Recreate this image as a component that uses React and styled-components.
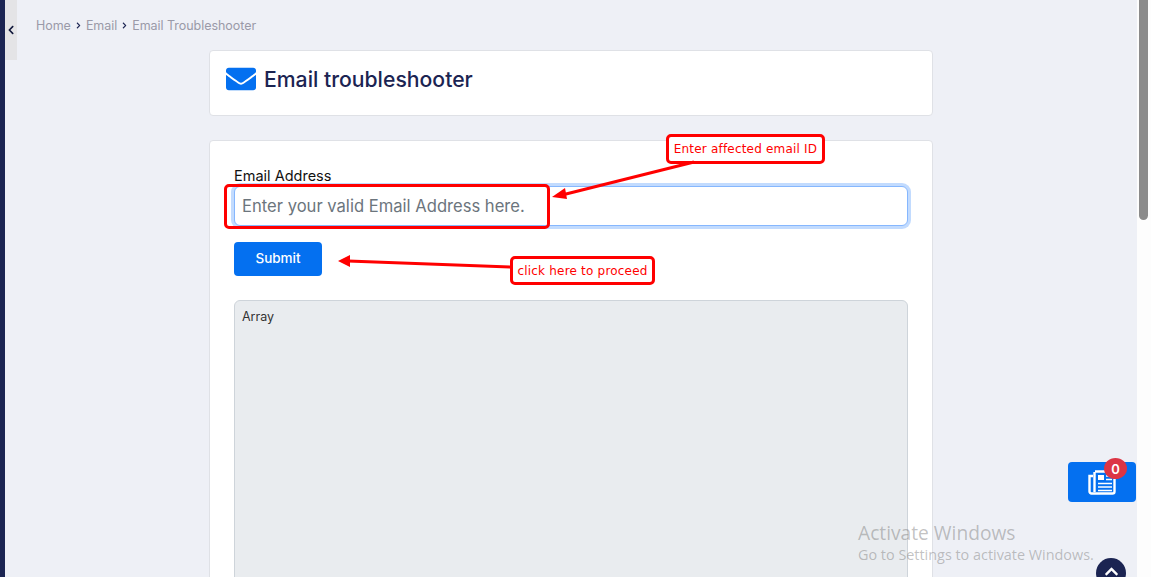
import React from "react";
import styled, { createGlobalStyle } from "styled-components";
import { FaEnvelope, FaChevronUp, FaChevronLeft, FaChevronRight } from "react-icons/fa";

const GlobalStyle = createGlobalStyle`
  html, body {
    margin: 0;
    height: 577px;
    overflow: hidden;
    background: #eef0f6;
    font-family: "Inter", "Liberation Sans", sans-serif;
  }
  * { box-sizing: border-box; }
`;

const Shell = styled.div`
  position: relative;
  display: flex;
  width: 1151px;
  height: 577px;
  overflow: hidden;
`;

const Rail = styled.div`
  width: 5px;
  background: #1b2452;
`;

const Main = styled.main`
  flex: 1;
  position: relative;
  padding: 0 0 0 31px;
  background: #eef0f6;
`;

const Toggle = styled.div`
  position: absolute;
  left: 0;
  top: 0;
  width: 12px;
  height: 60px;
  background: #e4e4e6;
  display: flex;
  align-items: center;
  justify-content: center;
  color: #10173a;
  font-size: 10px;
`;

const Breadcrumb = styled.nav`
  display: flex;
  align-items: center;
  gap: 4px;
  height: 50px;
  color: #9a9aa8;
  font-size: 12.5px;
  letter-spacing: -0.04px;
  svg {
    color: #1b2452;
    font-size: 7px;
  }
`;

const Column = styled.div`
  width: 724px;
  margin-left: 173px;
  display: flex;
  flex-direction: column;
  gap: 24px;
`;

const Card = styled.section`
  background: #fff;
  border: 1px solid #dfe1e6;
  border-radius: 4px;
`;

const HeaderCard = styled(Card)`
  height: 66px;
  display: flex;
  align-items: center;
  gap: 8px;
  padding: 0 16px 8px;
  svg {
    color: #0470f0;
    font-size: 30px;
  }
`;

const Title = styled.h1`
  margin: 0;
  font-size: 21.2px;
  font-weight: 500;
  color: #1b2452;
`;

const FormCard = styled(Card)`
  padding: 24px 24px 24px;
  height: 520px;
`;

const Label = styled.label`
  display: block;
  font-size: 14.5px;
  line-height: 21px;
  color: #111;
`;

const Input = styled.input`
  display: block;
  width: 100%;
  height: 40px;
  padding: 0 7px;
  border: 1px solid #86b7fe;
  border-radius: 6px;
  box-shadow: 0 0 0 3px #c2dbfe;
  outline: none;
  font: inherit;
  font-size: 16.6px;
  &::placeholder {
    color: #6c757d;
    opacity: 1;
  }
`;

const SubmitButton = styled.button`
  display: block;
  width: 88px;
  height: 34px;
  margin: 16px 0 24px;
  padding: 0 0 2px;
  border: none;
  border-radius: 4px;
  background: #0470f0;
  color: #fff;
  font: inherit;
  font-size: 13.5px;
  font-weight: 500;
`;

const Output = styled.pre`
  margin: 0;
  height: 320px;
  padding: 8px 7px;
  background: #e9ecef;
  border: 1px solid #ced4da;
  border-radius: 6px;
  font: inherit;
  font-size: 12.5px;
  color: #333;
`;

const Scrollbar = styled.div`
  width: 14px;
  background: #fdfdfd;
  padding: 0 3px 0 2px;
`;

const Thumb = styled.div`
  height: 220px;
  background: #8b8b8b;
  border-radius: 0 0 5px 5px;
`;

const Arrows = styled.svg`
  position: absolute;
  left: 0;
  top: 0;
  pointer-events: none;
`;

const Callout = styled.div`
  position: absolute;
  left: ${(p) => p.$left}px;
  top: ${(p) => p.$top}px;
  width: ${(p) => p.$width}px;
  height: ${(p) => p.$height}px;
  border: 3px solid #ff0000;
  border-radius: 5px;
  background: ${(p) => (p.$hollow ? "transparent" : "#fff")};
  color: #ff0000;
  font-family: "DejaVu Sans", Verdana, sans-serif;
  font-size: 12px;
  letter-spacing: 0.2px;
  display: flex;
  align-items: center;
  justify-content: center;
  white-space: nowrap;
`;

const NewsButton = styled.div`
  position: absolute;
  left: 1068px;
  top: 462px;
  width: 68px;
  height: 40px;
  background: #0470f0;
  border-radius: 4px;
  color: #fff;
  display: flex;
  align-items: center;
  justify-content: center;
`;

const Badge = styled.span`
  position: absolute;
  left: 36px;
  top: -4px;
  width: 23px;
  height: 21px;
  border-radius: 50%;
  background: #dc3545;
  color: #fff;
  font-size: 13px;
  font-weight: 600;
  display: flex;
  align-items: center;
  justify-content: center;
`;

const ScrollTop = styled.div`
  position: absolute;
  left: 1096px;
  top: 558px;
  width: 30px;
  height: 30px;
  border-radius: 50%;
  background: #1b2452;
  color: #fff;
  display: flex;
  justify-content: center;
  padding-top: 6px;
  font-size: 15px;
`;

const Watermark = styled.div`
  position: absolute;
  left: 858px;
  top: 520px;
  font-family: "Open Sans", sans-serif;
  color: rgba(120, 120, 120, 0.45);
  pointer-events: none;
`;

const WatermarkTitle = styled.div`
  font-size: 19.2px;
  line-height: 25px;
`;

const WatermarkText = styled.div`
  font-size: 14.4px;
  line-height: 20px;
`;

// newspaper with a folded left edge, portrait like the original button icon
const NewsIcon = () => (
  <svg width="28" height="25" viewBox="0 0 28 25" fill="none">
    <path d="M7 1.5h19.5v20a2 2 0 0 1-2 2H3.5a2 2 0 0 1-2-2V6H5" stroke="#fff" strokeWidth="2.4" />
    <path d="M6.5 2v20" stroke="#fff" strokeWidth="2.4" />
    <rect x="10" y="5" width="6" height="5" fill="#fff" />
    <path d="M18 6h6M18 9.5h6M10 13.5h14M10 17h14M10 20.5h14" stroke="#fff" strokeWidth="1.7" />
  </svg>
);

export default function App() {
  return (
    <>
      <GlobalStyle />
      <Shell>
        <Rail />
        <Main>
          <Toggle>
            <FaChevronLeft />
          </Toggle>
          <Breadcrumb>
            <span>Home</span>
            <FaChevronRight />
            <span>Email</span>
            <FaChevronRight />
            <span>Email Troubleshooter</span>
          </Breadcrumb>
          <Column>
            <HeaderCard>
              <FaEnvelope />
              <Title>Email troubleshooter</Title>
            </HeaderCard>
            <FormCard>
              <Label>Email Address</Label>
              <Input placeholder="Enter your valid Email Address here." />
              <SubmitButton>Submit</SubmitButton>
              <Output>Array</Output>
            </FormCard>
          </Column>
        </Main>
        <Scrollbar>
          <Thumb />
        </Scrollbar>

        <Callout $hollow $left={224} $top={184} $width={326} $height={45} />
        <Callout $left={666} $top={134} $width={159} $height={30}>
          Enter affected email ID
        </Callout>
        <Callout $left={510} $top={256} $width={145} $height={29}>
          click here to proceed
        </Callout>
        <Arrows width="1151" height="577" viewBox="0 0 1151 577">
          <line x1="694" y1="162" x2="562" y2="195" stroke="#ff0000" strokeWidth="3" />
          <polygon points="552,197 565,188 567,199" fill="#ff0000" />
          <line x1="511" y1="267" x2="348" y2="261" stroke="#ff0000" strokeWidth="3" />
          <polygon points="338,261 350,255 350,267" fill="#ff0000" />
        </Arrows>

        <NewsButton>
          <NewsIcon />
          <Badge>0</Badge>
        </NewsButton>
        <Watermark>
          <WatermarkTitle>Activate Windows</WatermarkTitle>
          <WatermarkText>Go to Settings to activate Windows.</WatermarkText>
        </Watermark>
        <ScrollTop>
          <FaChevronUp />
        </ScrollTop>
      </Shell>
    </>
  );
}
